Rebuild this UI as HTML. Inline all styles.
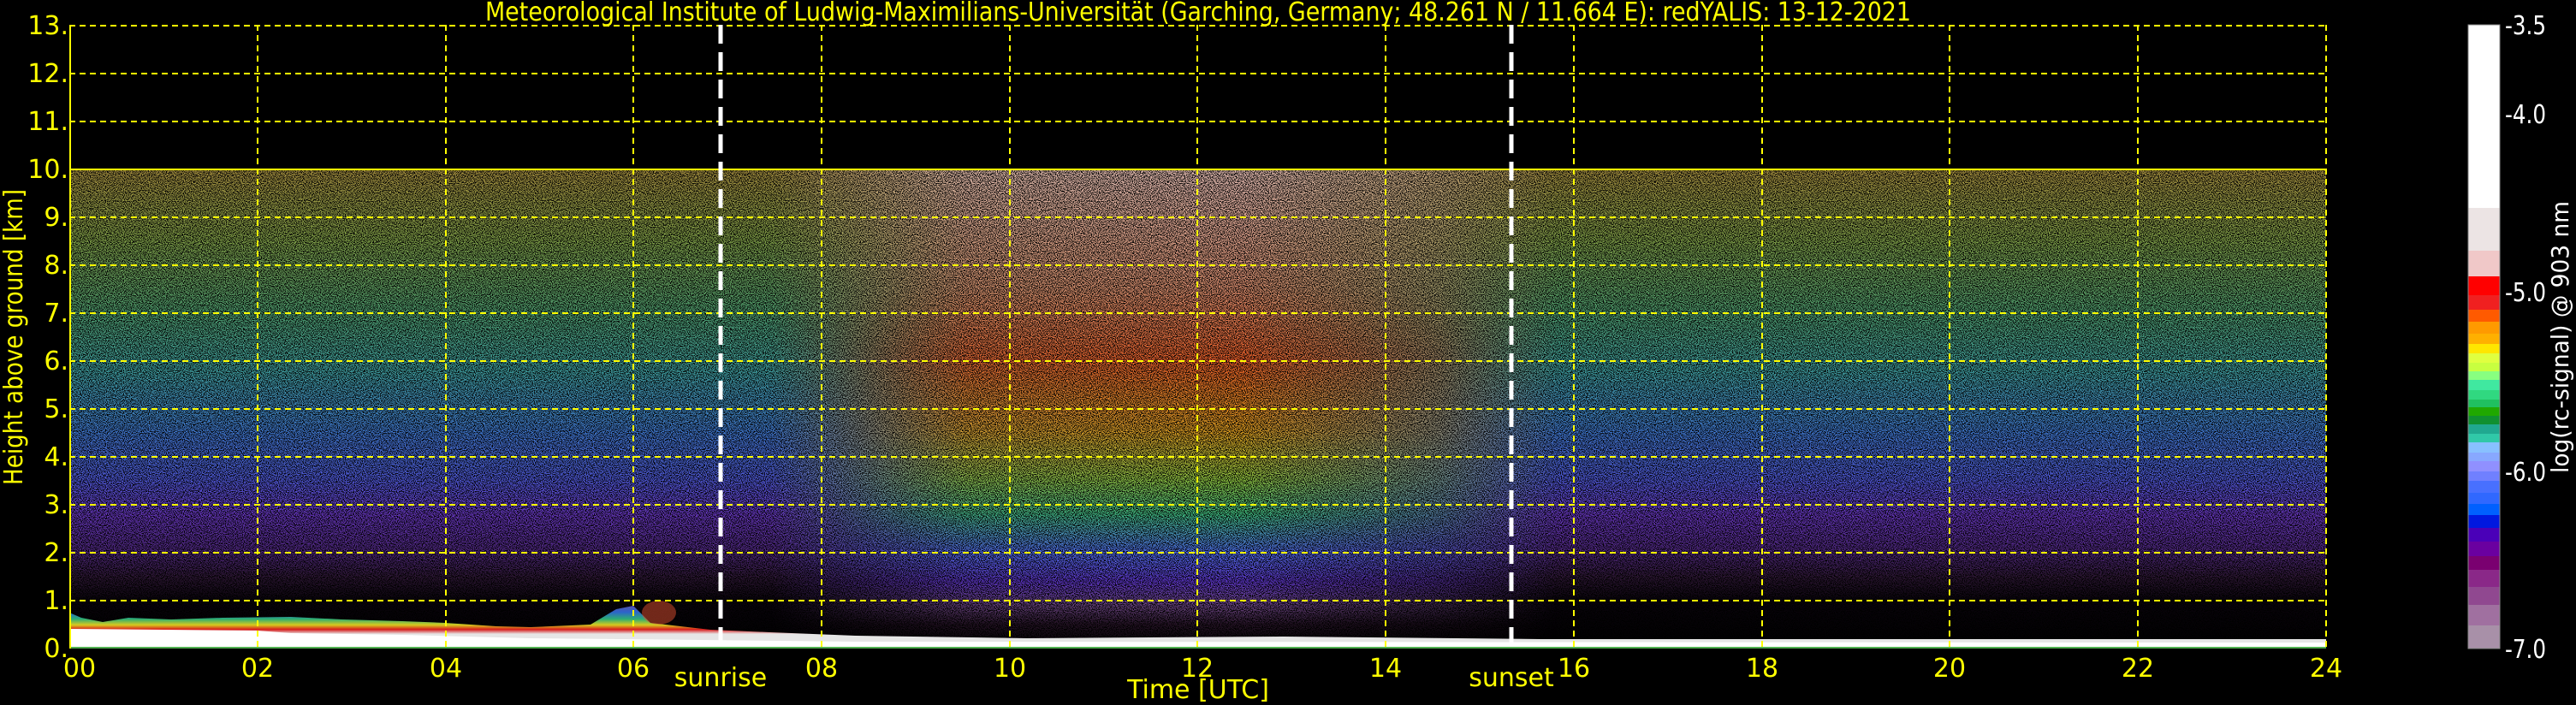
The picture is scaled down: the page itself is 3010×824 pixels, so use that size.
<!DOCTYPE html>
<html><head><meta charset="utf-8"><style>
html,body{margin:0;padding:0;background:#000;}
svg{display:block;}
text{font-family:"DejaVu Sans","Liberation Sans",sans-serif;}
</style></head><body>
<svg width="3010" height="824" viewBox="0 0 3010 824" xmlns="http://www.w3.org/2000/svg">
<defs>
<linearGradient id="night" x1="0" y1="197" x2="0" y2="758" gradientUnits="userSpaceOnUse">
<stop offset="0" stop-color="#a89040"/>
<stop offset="0.15" stop-color="#80a048"/>
<stop offset="0.3" stop-color="#50a070"/>
<stop offset="0.42" stop-color="#40a0a0"/>
<stop offset="0.55" stop-color="#4078d0"/>
<stop offset="0.65" stop-color="#5058d8"/>
<stop offset="0.72" stop-color="#6838c0"/>
<stop offset="0.8" stop-color="#502880"/>
<stop offset="0.85" stop-color="#301838"/>
<stop offset="0.9" stop-color="#0a040c"/>
<stop offset="1" stop-color="#000"/>
</linearGradient>
<linearGradient id="day" x1="0" y1="197" x2="0" y2="758" gradientUnits="userSpaceOnUse">
<stop offset="0" stop-color="#e8c0b8"/>
<stop offset="0.25" stop-color="#e09070"/>
<stop offset="0.4" stop-color="#f06028"/>
<stop offset="0.55" stop-color="#e0a020"/>
<stop offset="0.65" stop-color="#90c840"/>
<stop offset="0.72" stop-color="#40c080"/>
<stop offset="0.8" stop-color="#5070f0"/>
<stop offset="0.86" stop-color="#6038d0"/>
<stop offset="0.91" stop-color="#704888"/>
<stop offset="0.95" stop-color="#281428"/>
<stop offset="1" stop-color="#000"/>
</linearGradient>
<linearGradient id="hm" x1="900" y1="0" x2="1820" y2="0" gradientUnits="userSpaceOnUse">
<stop offset="0" stop-color="#fff" stop-opacity="0"/>
<stop offset="0.25" stop-color="#fff" stop-opacity="0.9"/>
<stop offset="0.6" stop-color="#fff" stop-opacity="1"/>
<stop offset="0.85" stop-color="#fff" stop-opacity="0.5"/>
<stop offset="1" stop-color="#fff" stop-opacity="0"/>
</linearGradient>
<mask id="dm"><rect x="81" y="197" width="2637" height="561" fill="url(#hm)"/></mask>
<linearGradient id="bl" x1="0" y1="705" x2="0" y2="758" gradientUnits="userSpaceOnUse">
<stop offset="0" stop-color="#7050b0"/>
<stop offset="0.2" stop-color="#3070e0"/>
<stop offset="0.35" stop-color="#30c080"/>
<stop offset="0.48" stop-color="#f0e020"/>
<stop offset="0.58" stop-color="#f02020"/>
<stop offset="0.68" stop-color="#fff"/>
<stop offset="1" stop-color="#fff"/>
</linearGradient>
<filter id="spk" x="81" y="197" width="2637" height="561" filterUnits="userSpaceOnUse">
<feTurbulence type="fractalNoise" baseFrequency="0.9" numOctaves="1" seed="7"/>
<feColorMatrix type="matrix" values="0 0 0 0 0  0 0 0 0 0  0 0 0 0 0  6 0 0 0 -2.6"/>
</filter>
</defs>

<!-- data -->
<rect x="81" y="197" width="2637" height="561" fill="url(#night)"/>
<rect x="81" y="197" width="2637" height="561" fill="url(#day)" mask="url(#dm)"/>
<rect x="81" y="197" width="2637" height="540" fill="#000" filter="url(#spk)"/>

<!-- boundary layer -->
<polygon points="81,716 95,722 120,727 150,722 200,724 260,722 340,721 400,724 470,726 520,728 580,732 620,733 690,730 720,712 740,708 760,728 830,736 900,739 1000,743 1200,746 1500,744 1800,747 2718,747 2718,758 81,758" fill="url(#bl)" opacity="0.9"/>
<polygon points="81,735 300,737 340,740 470,742 620,746 820,748 1000,750 2718,751 2718,756 81,756" fill="#fff"/>
<rect x="81" y="756" width="2637" height="2" fill="#50b050"/>
<ellipse cx="770" cy="716" rx="20" ry="14" fill="#e05030" opacity="0.5"/>

<!-- grid -->
<g stroke="#ffff00" stroke-width="2" stroke-dasharray="7,5">
<line x1="81" y1="30" x2="2718" y2="30"/>
<line x1="81" y1="86" x2="2718" y2="86"/>
<line x1="81" y1="142" x2="2718" y2="142"/>
<line x1="81" y1="198" x2="2718" y2="198" stroke-dasharray="none"/>
<line x1="81" y1="254" x2="2718" y2="254"/>
<line x1="81" y1="310" x2="2718" y2="310"/>
<line x1="81" y1="366" x2="2718" y2="366"/>
<line x1="81" y1="422" x2="2718" y2="422"/>
<line x1="81" y1="478" x2="2718" y2="478"/>
<line x1="81" y1="534" x2="2718" y2="534"/>
<line x1="81" y1="590" x2="2718" y2="590"/>
<line x1="81" y1="646" x2="2718" y2="646"/>
<line x1="81" y1="702" x2="2718" y2="702"/>
<line x1="301" y1="29" x2="301" y2="758"/>
<line x1="521" y1="29" x2="521" y2="758"/>
<line x1="740" y1="29" x2="740" y2="758"/>
<line x1="960" y1="29" x2="960" y2="758"/>
<line x1="1180" y1="29" x2="1180" y2="758"/>
<line x1="1399" y1="29" x2="1399" y2="758"/>
<line x1="1619" y1="29" x2="1619" y2="758"/>
<line x1="1839" y1="29" x2="1839" y2="758"/>
<line x1="2059" y1="29" x2="2059" y2="758"/>
<line x1="2278" y1="29" x2="2278" y2="758"/>
<line x1="2498" y1="29" x2="2498" y2="758"/>
<line x1="2718" y1="29" x2="2718" y2="758"/>
<line x1="82" y1="29" x2="82" y2="758" stroke-dasharray="none"/>
</g>
<g stroke="#fff" stroke-width="5" stroke-dasharray="22,10">
<line x1="842" y1="29" x2="842" y2="758"/>
<line x1="1766" y1="29" x2="1766" y2="758"/>
</g>

<!-- labels -->
<g fill="#ffff00" font-size="30">
<text x="1400" y="24" text-anchor="middle" textLength="1666" lengthAdjust="spacingAndGlyphs">Meteorological Institute of Ludwig-Maximilians-Universität (Garching, Germany; 48.261 N / 11.664 E):    redYALIS: 13-12-2021</text>
<g text-anchor="end">
<text x="80" y="40">13.</text><text x="80" y="96">12.</text><text x="80" y="152">11.</text>
<text x="80" y="208">10.</text><text x="80" y="264">9.</text><text x="80" y="320">8.</text>
<text x="80" y="376">7.</text><text x="80" y="432">6.</text><text x="80" y="488">5.</text>
<text x="80" y="544">4.</text><text x="80" y="600">3.</text><text x="80" y="656">2.</text>
<text x="80" y="712">1.</text><text x="80" y="768">0.</text>
</g>
<g text-anchor="middle">
<text x="93" y="791">00</text><text x="301" y="791">02</text><text x="521" y="791">04</text>
<text x="740" y="791">06</text><text x="960" y="791">08</text><text x="1180" y="791">10</text>
<text x="1399" y="791">12</text><text x="1619" y="791">14</text><text x="1839" y="791">16</text>
<text x="2059" y="791">18</text><text x="2278" y="791">20</text><text x="2498" y="791">22</text>
<text x="2718" y="791">24</text>
<text x="842" y="802">sunrise</text><text x="1766" y="802">sunset</text>
<text x="1400" y="816">Time [UTC]</text>
</g>
<text transform="translate(26,394) rotate(-90)" text-anchor="middle" font-size="30" textLength="346" lengthAdjust="spacingAndGlyphs">Height above ground [km]</text>
</g>

<!-- colorbar -->
<g>
<rect x="2884" y="29" width="37" height="214" fill="#fff"/>
<rect x="2884" y="243" width="37" height="50" fill="#ece4e4"/>
<rect x="2884" y="293" width="37" height="30" fill="#f0c8c8"/>
<rect x="2884" y="323" width="37" height="22" fill="#ff0000"/>
<rect x="2884" y="345" width="37" height="17" fill="#f02020"/>
<rect x="2884" y="362" width="37" height="14" fill="#ff5a00"/>
<rect x="2884" y="376" width="37" height="14" fill="#ff9a00"/>
<rect x="2884" y="390" width="37" height="12" fill="#ffb000"/>
<rect x="2884" y="402" width="37" height="11" fill="#ffe600"/>
<rect x="2884" y="413" width="37" height="11" fill="#e0ff40"/>
<rect x="2884" y="424" width="37" height="10" fill="#c8ff40"/>
<rect x="2884" y="434" width="37" height="10" fill="#88ff80"/>
<rect x="2884" y="444" width="37" height="12" fill="#40e8a0"/>
<rect x="2884" y="456" width="37" height="11" fill="#30d880"/>
<rect x="2884" y="467" width="37" height="9" fill="#20c060"/>
<rect x="2884" y="476" width="37" height="10" fill="#20a800"/>
<rect x="2884" y="486" width="37" height="10" fill="#109030"/>
<rect x="2884" y="496" width="37" height="11" fill="#20a890"/>
<rect x="2884" y="507" width="37" height="10" fill="#30c8a8"/>
<rect x="2884" y="517" width="37" height="12" fill="#88c0ff"/>
<rect x="2884" y="529" width="37" height="10" fill="#88a8ff"/>
<rect x="2884" y="539" width="37" height="12" fill="#9090ff"/>
<rect x="2884" y="551" width="37" height="11" fill="#7080ff"/>
<rect x="2884" y="562" width="37" height="14" fill="#4870ff"/>
<rect x="2884" y="576" width="37" height="13" fill="#3068ff"/>
<rect x="2884" y="589" width="37" height="13" fill="#0060ff"/>
<rect x="2884" y="602" width="37" height="15" fill="#0018e0"/>
<rect x="2884" y="617" width="37" height="16" fill="#4a00b8"/>
<rect x="2884" y="633" width="37" height="17" fill="#6a00a0"/>
<rect x="2884" y="650" width="37" height="16" fill="#7a0070"/>
<rect x="2884" y="666" width="37" height="20" fill="#8a2888"/>
<rect x="2884" y="686" width="37" height="21" fill="#904890"/>
<rect x="2884" y="707" width="37" height="24" fill="#a070a0"/>
<rect x="2884" y="731" width="37" height="27" fill="#a890a8"/>
<rect x="2884" y="29" width="37" height="729" fill="none" stroke="#888" stroke-width="1"/>
</g>
<g fill="#fff" font-size="30">
<text x="2927" y="40" textLength="48" lengthAdjust="spacingAndGlyphs">-3.5</text>
<text x="2927" y="144" textLength="48" lengthAdjust="spacingAndGlyphs">-4.0</text>
<text x="2927" y="352" textLength="48" lengthAdjust="spacingAndGlyphs">-5.0</text>
<text x="2927" y="562" textLength="48" lengthAdjust="spacingAndGlyphs">-6.0</text>
<text x="2927" y="769" textLength="48" lengthAdjust="spacingAndGlyphs">-7.0</text>
<text transform="translate(3001,394) rotate(-90)" text-anchor="middle" font-size="28" textLength="318" lengthAdjust="spacingAndGlyphs">log(rc-signal) @ 903 nm</text>
</g>
</svg>
</body></html>
